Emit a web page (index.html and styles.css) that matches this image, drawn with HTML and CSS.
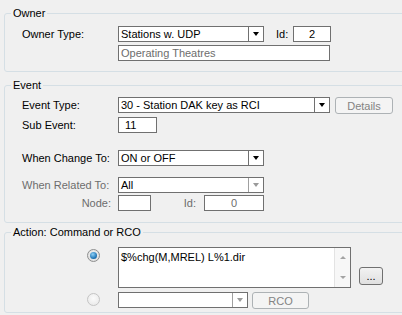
FILE: index.html
```html
<!DOCTYPE html>
<html lang="en">
<head>
    <meta charset="UTF-8">
    <title>Event Action</title>
    <link rel="stylesheet" href="styles.css">
</head>
<body>
<div class="group owner">
    <span class="group-title">Owner</span>
    <div class="row">
        <label class="lbl">Owner Type:</label>
        <div class="combo combo-short">
            <span class="combo-text">Stations w. UDP</span>
            <span class="combo-btn"><i class="arrow"></i></span>
        </div>
        <span class="id-lbl">Id:</span>
        <div class="box id-box">2</div>
    </div>
    <div class="row row-gap3">
        <span class="lbl"></span>
        <div class="box box-wide muted">Operating Theatres</div>
    </div>
</div>

<div class="group event">
    <span class="group-title">Event</span>
    <div class="row">
        <label class="lbl">Event Type:</label>
        <div class="combo combo-wide">
            <span class="combo-text">30 - Station DAK key as RCI</span>
            <span class="combo-btn"><i class="arrow"></i></span>
        </div>
        <button class="btn btn-details" disabled>Details</button>
    </div>
    <div class="row row-gap4">
        <label class="lbl">Sub Event:</label>
        <div class="box sub-box">11</div>
    </div>
    <div class="row row-gap17">
        <label class="lbl">When Change To:</label>
        <div class="combo combo-short">
            <span class="combo-text">ON or OFF</span>
            <span class="combo-btn"><i class="arrow"></i></span>
        </div>
    </div>
    <div class="row row-gap11 disabled">
        <label class="lbl">When Related To:</label>
        <div class="combo combo-short">
            <span class="combo-text">All</span>
            <span class="combo-btn"><i class="arrow"></i></span>
        </div>
    </div>
    <div class="row row-gap2 disabled">
        <label class="lbl lbl-right">Node:</label>
        <div class="box node-box"></div>
        <span class="node-id-lbl">Id:</span>
        <div class="box node-id-box">0</div>
    </div>
</div>

<div class="group action">
    <span class="group-title">Action: Command or RCO</span>
    <div class="row row-memo">
        <div class="radio-cell"><span class="radio checked"></span></div>
        <div class="memo">
            <span class="memo-text">$%chg(M,MREL) L%1.dir</span>
            <div class="scrollbar">
                <i class="sarrow up"></i>
                <i class="sarrow down"></i>
            </div>
        </div>
        <button class="btn btn-dots">...</button>
    </div>
    <div class="row row-gap4 row-rco">
        <div class="radio-cell"><span class="radio"></span></div>
        <div class="combo combo-rco disabled">
            <span class="combo-text"></span>
            <span class="combo-btn"><i class="arrow"></i></span>
        </div>
        <button class="btn btn-rco" disabled>RCO</button>
    </div>
</div>
</body>
</html>
```

FILE: styles.css
```css
html, body {
    margin: 0;
    padding: 0;
}

body {
    width: 402px;
    height: 315px;
    overflow: hidden;
    background: #f0f0f0;
    font-family: "Liberation Sans", Arial, sans-serif;
    font-size: 11px;
    color: #000;
}

/* group boxes */
.group {
    position: relative;
    margin-left: 4px;
    margin-right: -10px;
    border: 1px solid #d5dfe5;
    border-radius: 3px;
}

.group-title {
    position: absolute;
    top: -7px;
    left: 6px;
    padding: 0 2px;
    line-height: 13px;
    background: #f0f0f0;
}

.owner {
    margin-top: 13px;
    padding: 12px 0 10px;
}

.event {
    margin-top: 13px;
    padding: 11px 0 11px;
}

.action {
    margin-top: 9px;
    padding: 14px 0 3px;
}

/* rows */
.row {
    display: flex;
    align-items: flex-start;
    height: 16px;
    padding-left: 17px;
}

.row-gap2 { margin-top: 2px; }
.row-gap3 { margin-top: 3px; }
.row-gap4 { margin-top: 4px; }
.row-gap11 { margin-top: 11px; }
.row-gap17 { margin-top: 17px; }

.lbl {
    flex: none;
    width: 96px;
    line-height: 16px;
}

.lbl-right {
    text-align: right;
    padding-right: 7px;
    box-sizing: border-box;
}

.disabled,
.disabled .lbl,
.muted {
    color: #6d6d6d;
}

/* text boxes */
.box {
    flex: none;
    box-sizing: border-box;
    height: 16px;
    border: 1px solid #707070;
    background: #fff;
    line-height: 14px;
    padding: 0 2px;
    white-space: nowrap;
}

.box-wide { width: 212px; }

.id-lbl {
    width: 17px;
    margin-left: 12px;
    line-height: 16px;
}

.id-box {
    width: 38px;
    text-align: center;
    color: #000;
}

.sub-box {
    width: 39px;
    padding-left: 6px;
}

.node-box { width: 33px; }

.node-id-lbl {
    width: 53px;
    padding-right: 8px;
    box-sizing: border-box;
    text-align: right;
    line-height: 16px;
}

.node-id-box {
    width: 60px;
    text-align: center;
    color: #6d6d6d;
}

/* combo boxes */
.combo {
    flex: none;
    display: flex;
    box-sizing: border-box;
    height: 16px;
    border: 1px solid #707070;
    background: #fff;
}

.combo-short { width: 146px; }
.combo-wide { width: 212px; }
.combo-rco { width: 130px; }

.combo-text {
    flex: 1;
    padding-left: 2px;
    line-height: 14px;
    white-space: nowrap;
    overflow: hidden;
    color: #000;
}

.combo-btn {
    flex: none;
    width: 14px;
    border-left: 1px solid #707070;
    display: flex;
    align-items: center;
    justify-content: center;
}

.disabled .combo-btn {
    border-left-color: #a0a0a0;
}

.arrow {
    display: block;
    width: 0;
    height: 0;
    border-top: 4px solid #000;
    border-left: 3px solid transparent;
    border-right: 3px solid transparent;
}

.disabled .arrow {
    border-top-color: #9a9a9a;
}

/* buttons */
.btn {
    flex: none;
    box-sizing: border-box;
    padding: 0;
    font-family: inherit;
    font-size: 11px;
    border-radius: 3px;
    background: #f4f4f4;
    border: 1px solid #adb2b5;
    color: #838383;
}

.btn-details {
    width: 58px;
    height: 17px;
    margin-left: 5px;
}

.btn-dots {
    align-self: flex-end;
    width: 24px;
    height: 18px;
    margin-left: 8px;
    margin-bottom: 3px;
    color: #000;
    border-color: #707070;
    background: linear-gradient(#f2f2f2, #e0e0e0);
    line-height: 10px;
}

.btn-rco {
    width: 57px;
    height: 17px;
    margin-left: 4px;
}

/* action area */
.row-memo {
    height: 41px;
}

.row-rco {
    height: 17px;
}

.radio-cell {
    flex: none;
    width: 96px;
    padding-left: 65px;
    box-sizing: border-box;
}

.radio {
    display: block;
    width: 11px;
    height: 11px;
    margin-top: 2px;
    border: 1px solid #8e8f8f;
    border-radius: 50%;
    background: radial-gradient(circle at 50% 40%, #f4f4f4, #d9d9d9);
    position: relative;
}

.row-rco .radio {
    margin-top: 1px;
    border-color: #c4c4c4;
    background: radial-gradient(circle at 50% 40%, #fbfbfb, #e6e6e6);
}

.radio.checked::after {
    content: "";
    position: absolute;
    left: 2px;
    top: 2px;
    width: 7px;
    height: 7px;
    border-radius: 50%;
    background: radial-gradient(circle at 40% 35%, #8fd0f6, #1e74b5 65%, #0b4a82);
}

.memo {
    flex: none;
    display: flex;
    box-sizing: border-box;
    width: 233px;
    height: 41px;
    border: 1px solid #707070;
    background: #fff;
}

.memo-text {
    flex: 1;
    padding: 3px 0 0 2px;
    line-height: 13px;
}

.scrollbar {
    flex: none;
    width: 15px;
    border-left: 1px solid #e3e3e3;
    background: #f7f7f7;
    display: flex;
    flex-direction: column;
    justify-content: space-between;
    align-items: center;
    padding: 8px 0 8px;
}

.sarrow {
    display: block;
    width: 0;
    height: 0;
    border-left: 3px solid transparent;
    border-right: 3px solid transparent;
}

.sarrow.up { border-bottom: 3px solid #a3a3a3; }
.sarrow.down { border-top: 3px solid #a3a3a3; }
```
